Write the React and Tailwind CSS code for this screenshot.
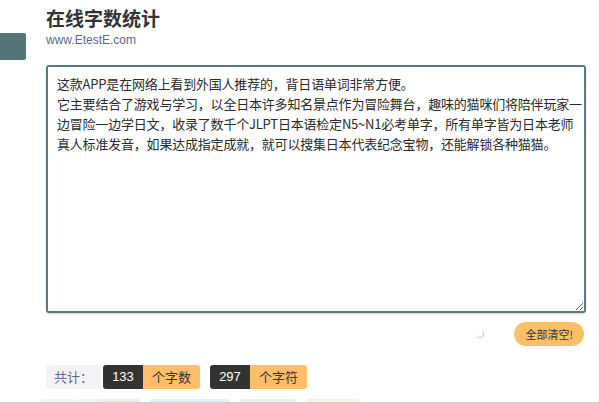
import React from "react";

const text =
  "这款APP是在网络上看到外国人推荐的，背日语单词非常方便。\n它主要结合了游戏与学习，以全日本许多知名景点作为冒险舞台，趣味的猫咪们将陪伴玩家一\n边冒险一边学日文，收录了数千个JLPT日本语检定N5~N1必考单字，所有单字皆为日本老师\n真人标准发音，如果达成指定成就，就可以搜集日本代表纪念宝物，还能解锁各种猫猫。";

export default function App() {
  return (
    <div
      className="relative w-[600px] h-[403px] overflow-hidden bg-white border-r border-b border-[#cfcfcf]"
      style={{ fontFamily: '"Noto Sans CJK SC", "Noto Sans", sans-serif' }}
    >
      <div className="absolute left-0 top-[33px] w-[26px] h-[27px] bg-[#557479] rounded-r-[2px]" />
      <div className="pl-[46px] pr-[13px] pt-[4px]">
        <h1 className="text-[19px] leading-[28px] font-bold text-[#333]">在线字数统计</h1>
        <div
          className="text-[12px] leading-[16px] text-[#5a6a8e]"
          style={{ fontFamily: '"Liberation Sans", Arial, sans-serif' }}
        >
          www.EtestE.com
        </div>
        <textarea
          readOnly
          wrap="off"
          defaultValue={text}
          className="mt-[17px] block w-[540px] h-[248px] border-2 border-[#5b7a80] rounded-[3px] pl-[9px] pr-[2px] pt-[7px] text-[13px] leading-[20px] tracking-[-0.2px] text-[#2a2a2a] outline-none overflow-hidden shadow-[0_1px_2px_rgba(0,0,0,0.2)]"
          style={{ fontFamily: '"Noto Sans CJK SC", sans-serif', resize: "both" }}
        />
        <div className="flex items-center justify-end mt-[9px] w-[540px]">
          <div className="w-[8px] h-[8px] rounded-full border-r border-b border-[#ccc] mr-[30px]" />
          <button className="h-[24px] px-[11px] rounded-full bg-[#ffbe6a] text-[11px] text-[#333] mr-[2px]">
            全部清空!
          </button>
        </div>
        <div className="flex items-center mt-[19px] text-[13px] h-[24px]">
          <div className="h-full w-[55px] flex items-center justify-center bg-[#f3f3f5] text-[#5a6a8e] rounded-l-[3px]">
            共计：
          </div>
          <div className="h-full w-[40px] ml-[2px] flex items-center justify-center bg-[#333] text-white rounded-l-[3px]" style={{ fontFamily: '"Liberation Sans", Arial, sans-serif' }}>
            133
          </div>
          <div className="h-full w-[57px] flex items-center justify-center bg-[#ffbe6a] text-[#333] rounded-r-[3px]">
            个字数
          </div>
          <div className="h-full w-[40px] ml-[10px] flex items-center justify-center bg-[#333] text-white rounded-l-[3px]" style={{ fontFamily: '"Liberation Sans", Arial, sans-serif' }}>
            297
          </div>
          <div className="h-full w-[57px] flex items-center justify-center bg-[#ffbe6a] text-[#333] rounded-r-[3px]">
            个字符
          </div>
        </div>
        <div className="flex mt-[10px] h-[8px] -ml-[6px]">
          <div className="w-[36px] bg-[#f3f3f3] rounded-[2px]" />
          <div className="w-[60px] ml-[2px] bg-[#f3f3f3] rounded-[2px]" />
          <div className="w-[40px] -ml-[38px] bg-[#fbe6ea] rounded-[2px]" />
          <div className="w-[80px] ml-[10px] bg-[#e6eef8] rounded-[2px]" />
          <div className="w-[56px] ml-[10px] bg-[#f0f0f0] rounded-[2px]" />
          <div className="w-[54px] ml-[10px] bg-[#fdf0e2] rounded-[2px]" />
        </div>
      </div>
    </div>
  );
}
